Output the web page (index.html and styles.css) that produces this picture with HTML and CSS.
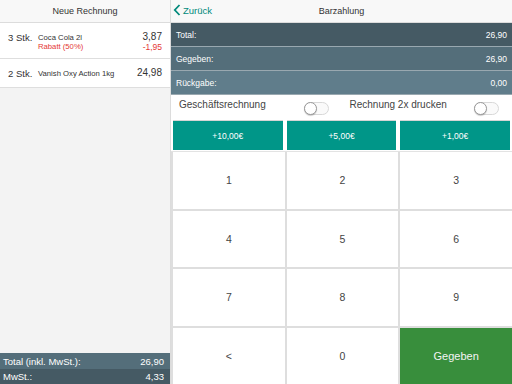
FILE: index.html
```html
<!DOCTYPE html>
<html lang="de">
<head>
    <meta charset="UTF-8">
    <meta name="viewport" content="width=device-width, initial-scale=1.0">
    <title>Barzahlung</title>
    <link rel="stylesheet" href="styles.css">
</head>
<body>
    <div class="app">
        <aside class="invoice">
            <header class="bar-title">Neue Rechnung</header>

            <div class="item">
                <span class="qty">3 Stk.</span>
                <div class="name">
                    <span>Coca Cola 2l</span>
                    <span class="discount">Rabatt (50%)</span>
                </div>
                <div class="price">
                    <span>3,87</span>
                    <span class="discount-price">-1,95</span>
                </div>
            </div>

            <div class="item">
                <span class="qty">2 Stk.</span>
                <div class="name">
                    <span>Vanish Oxy Action 1kg</span>
                </div>
                <div class="price">
                    <span>24,98</span>
                </div>
            </div>

            <div class="spacer"></div>

            <div class="sum sum-total"><span>Total (inkl. MwSt.):</span><span>26,90</span></div>
            <div class="sum sum-tax"><span>MwSt.:</span><span>4,33</span></div>
        </aside>

        <main class="payment">
            <header class="bar-title nav">
                <a class="back" href="#">
                    <svg width="8" height="12" viewBox="0 0 8 12"><path d="M6.5 1 L1.8 6 L6.5 11" fill="none" stroke="#00897b" stroke-width="1.8"/></svg>
                    Zurück
                </a>
                <span>Barzahlung</span>
            </header>

            <div class="info info-1"><span>Total:</span><span>26,90</span></div>
            <div class="info info-2"><span>Gegeben:</span><span>26,90</span></div>
            <div class="info info-3"><span>Rückgabe:</span><span>0,00</span></div>

            <div class="options">
                <div class="option">
                    <span>Geschäftsrechnung</span>
                    <span class="toggle"></span>
                </div>
                <div class="option">
                    <span>Rechnung 2x drucken</span>
                    <span class="toggle"></span>
                </div>
            </div>

            <div class="quick">
                <button>+10,00€</button>
                <button>+5,00€</button>
                <button>+1,00€</button>
            </div>

            <div class="keypad">
                <button>1</button>
                <button>2</button>
                <button>3</button>
                <button>4</button>
                <button>5</button>
                <button>6</button>
                <button>7</button>
                <button>8</button>
                <button>9</button>
                <button>&lt;</button>
                <button>0</button>
                <button class="confirm">Gegeben</button>
            </div>
        </main>
    </div>
</body>
</html>
```

FILE: styles.css
```css
body, html {
    margin: 0;
    padding: 0;
    height: 100%;
    font-family: "Liberation Sans", Arial, sans-serif;
    color: #333;
}

.app {
    display: flex;
    height: 384px;
    width: 512px;
    overflow: hidden;
}

.bar-title {
    height: 22px;
    border-bottom: 1px solid #dcdcdc;
    background: #f8f8f8;
    display: flex;
    align-items: center;
    justify-content: center;
    font-size: 9px;
    color: #333;
}

/* left side */

.invoice {
    width: 170px;
    border-right: 1px solid #dcdcdc;
    background: #f3f3f3;
    display: flex;
    flex-direction: column;
}

.item {
    display: flex;
    align-items: flex-start;
    background: #fff;
    border-bottom: 1px solid #dedede;
    padding: 8px 8px 0 8px;
    height: 27px;
}

.item + .item {
    height: 20px;
}

.qty {
    width: 30px;
    font-size: 9.5px;
    padding-top: 1px;
}

.name {
    flex: 1;
    display: flex;
    flex-direction: column;
    font-size: 7.7px;
    padding-top: 2px;
}

.price {
    display: flex;
    flex-direction: column;
    align-items: flex-end;
    font-size: 10px;
}

.discount,
.discount-price {
    color: #e53935;
}

.discount-price {
    font-size: 8.5px;
}

.spacer {
    flex: 1;
}

.sum {
    display: flex;
    justify-content: space-between;
    align-items: center;
    color: #fff;
    font-size: 9.5px;
    padding: 0 6px 0 3px;
}

.sum-total {
    height: 16px;
    background: #546e7a;
}

.sum-tax {
    height: 15px;
    background: #455a64;
}

/* right side */

.payment {
    flex: 1;
    display: flex;
    flex-direction: column;
    background: #fff;
}

.nav {
    position: relative;
}

.back {
    position: absolute;
    left: 2px;
    top: 4px;
    display: flex;
    align-items: center;
    gap: 2px;
    color: #00897b;
    text-decoration: none;
    font-size: 9.5px;
}

.info {
    display: flex;
    justify-content: space-between;
    align-items: center;
    height: 23px;
    border-bottom: 1px solid #99a8b0;
    color: #fff;
    font-size: 8.5px;
    padding: 0 5px;
}

.info-1 { background: #455a64; }
.info-2 { background: #546e7a; }
.info-3 { background: #607d8b; }

.options {
    display: flex;
    height: 24px;
    font-size: 10px;
    color: #444;
}

.option {
    flex: 1;
    display: flex;
    justify-content: space-between;
    padding: 4px 13px 0 8px;
}

.toggle {
    width: 23px;
    height: 11px;
    border: 1px solid #d8d8d8;
    border-radius: 7px;
    background: #fafafa;
    margin-top: 3px;
    position: relative;
}

.toggle::before {
    content: "";
    position: absolute;
    left: -1px;
    top: -1px;
    width: 11px;
    height: 11px;
    border-radius: 50%;
    background: #fff;
    border: 1px solid #999;
    box-shadow: 0 1px 1px rgba(0, 0, 0, 0.2);
}

.quick {
    display: flex;
    gap: 4px;
    padding: 1px 2px 1px 2px;
    background: #fff;
}

.quick button {
    flex: 1;
    height: 30px;
    border: none;
    border-top: 1px solid #d5d5d5;
    background: #009688;
    color: #fff;
    font-family: inherit;
    font-size: 8.5px;
    padding: 0;
}

.keypad {
    flex: 1;
    display: grid;
    grid-template-columns: repeat(3, 1fr);
    grid-template-rows: repeat(4, 1fr);
    gap: 2px;
    background: #dedede;
    border-top: 1px solid #e3e3e3;
    padding-left: 2px;
}

.keypad button {
    border: none;
    background: #fff;
    font-family: inherit;
    font-size: 10.5px;
    color: #444;
    padding: 0;
}

.keypad .confirm {
    background: #388e3c;
    color: #f4f4f4;
    font-size: 11px;
}
```
